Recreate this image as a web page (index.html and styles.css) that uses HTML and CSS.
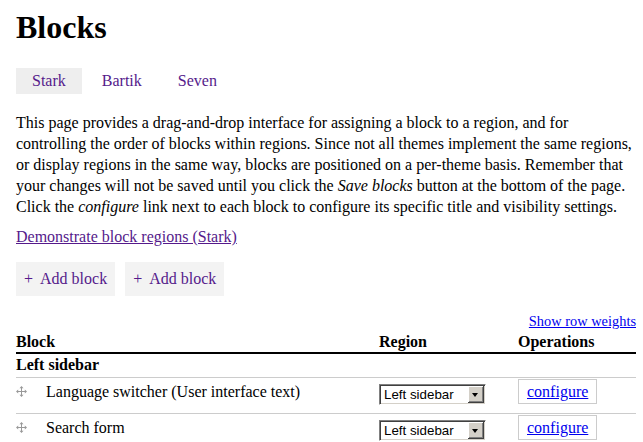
FILE: index.html
```html
<!DOCTYPE html>
<html lang="en">
<head>
  <meta charset="UTF-8">
  <meta name="viewport" content="width=device-width, initial-scale=1.0">
  <title>Blocks</title>
  <link rel="stylesheet" href="styles.css">
</head>
<body>
  <div class="pagina">
    <h1>Blocks</h1>

    <ul class="pestanas">
      <li><a href="#" class="activa">Stark</a></li>
      <li><a href="#">Bartik</a></li>
      <li><a href="#">Seven</a></li>
    </ul>

    <p class="intro">This page provides a drag-and-drop interface for assigning a block to a region, and for controlling the order of blocks within regions. Since not all themes implement the same regions, or display regions in the same way, blocks are positioned on a per-theme basis. Remember that your changes will not be saved until you click the <em>Save blocks</em> button at the bottom of the page. Click the <em>configure</em> link next to each block to configure its specific title and visibility settings.</p>

    <p class="demo"><a href="#">Demonstrate block regions (Stark)</a></p>

    <div class="acciones">
      <button><span class="mas">+</span>Add block</button>
      <button><span class="mas">+</span>Add block</button>
    </div>

    <div class="pesos"><a href="#">Show row weights</a></div>

    <table class="bloques">
      <colgroup>
        <col class="col-bloque">
        <col class="col-region">
        <col class="col-ops">
      </colgroup>
      <thead>
        <tr>
          <th>Block</th>
          <th>Region</th>
          <th>Operations</th>
        </tr>
      </thead>
      <tbody>
        <tr class="region">
          <td colspan="3">Left sidebar</td>
        </tr>
        <tr class="fila">
          <td>
            <div class="celda-bloque">
              <span class="asa">
                <svg width="11" height="11" viewBox="0 0 11 11">
                  <path d="M5.5 1.5v8M1.5 5.5h8" stroke="#999" stroke-width="1"/>
                  <path d="M5.5 0l2 2.2h-4zM5.5 11l2-2.2h-4zM0 5.5l2.2-2v4zM11 5.5l-2.2-2v4z" fill="#999"/>
                </svg>
              </span>
              <span class="titulo">Language switcher (User interface text)</span>
            </div>
          </td>
          <td>
            <div class="selector"><span class="valor">Left sidebar</span><span class="flecha"></span></div>
          </td>
          <td><a href="#" class="configurar">configure</a></td>
        </tr>
        <tr class="fila">
          <td>
            <div class="celda-bloque">
              <span class="asa">
                <svg width="11" height="11" viewBox="0 0 11 11">
                  <path d="M5.5 1.5v8M1.5 5.5h8" stroke="#999" stroke-width="1"/>
                  <path d="M5.5 0l2 2.2h-4zM5.5 11l2-2.2h-4zM0 5.5l2.2-2v4zM11 5.5l-2.2-2v4z" fill="#999"/>
                </svg>
              </span>
              <span class="titulo">Search form</span>
            </div>
          </td>
          <td>
            <div class="selector"><span class="valor">Left sidebar</span><span class="flecha"></span></div>
          </td>
          <td><a href="#" class="configurar">configure</a></td>
        </tr>
      </tbody>
    </table>
  </div>
</body>
</html>
```

FILE: styles.css
```css
body {
  margin: 0;
  font-family: 'Liberation Serif', 'Times New Roman', serif;
  font-size: 16px;
  color: #000;
  background: #fff;
}

.pagina {
  padding: 9px 7px 0 16px;
}

h1 {
  margin: 0 0 23px;
  font-size: 32px;
  line-height: 36px;
  font-weight: bold;
}

.pestanas {
  display: flex;
  gap: 4px;
  list-style: none;
  margin: 0 0 18px;
  padding: 0;
}

.pestanas a {
  display: block;
  padding: 4px 16px;
  line-height: 18px;
  color: #551a8b;
  text-decoration: none;
}

.pestanas a.activa {
  background: #eee;
}

.intro {
  margin: 0 0 9px;
  line-height: 21px;
}

.demo {
  margin: 0 0 15px;
  line-height: 21px;
}

.demo a {
  color: #551a8b;
}

.acciones {
  display: flex;
  gap: 10px;
  margin-bottom: 16px;
}

.acciones button {
  padding: 8px;
  border: none;
  background: #f3f3f3;
  color: #551a8b;
  font-family: inherit;
  font-size: 16px;
  line-height: 18px;
  cursor: pointer;
}

.mas {
  margin-right: 7px;
}

.pesos {
  width: 620px;
  text-align: right;
  font-size: 14.4px;
  line-height: 18px;
}

.pesos a {
  color: #00e;
}

.bloques {
  width: 620px;
  table-layout: fixed;
  border-collapse: separate;
  border-spacing: 0;
}

.col-bloque { width: 363px; }
.col-region { width: 139px; }
.col-ops { width: 118px; }

.bloques th {
  text-align: left;
  padding: 3px 0 1px;
  line-height: 18px;
  border-bottom: 2px solid #000;
}

.bloques td {
  padding: 0;
  line-height: 18px;
  vertical-align: top;
}

.region td {
  padding: 2px 0 3px;
  font-weight: bold;
  border-bottom: 1px solid #ccc;
}

.fila td {
  padding: 1px 0 8px;
  border-bottom: 1px solid #ccc;
}

.celda-bloque {
  display: flex;
  align-items: flex-start;
}

.asa {
  width: 30px;
  padding-top: 7px;
  line-height: 0;
}

.titulo {
  padding-top: 4px;
}

.selector {
  display: flex;
  align-items: center;
  box-sizing: border-box;
  width: 107px;
  height: 21px;
  margin-top: 5px;
  border: 1px solid;
  border-color: #808080 #fff #fff #808080;
  box-shadow: inset 1px 1px #404040, inset -1px -1px #d4d0c8;
  background: #fff;
  font-family: 'Liberation Sans', Arial, sans-serif;
  font-size: 13.33px;
  line-height: 15px;
}

.valor {
  flex: 1;
  padding-left: 4px;
}

.flecha {
  position: relative;
  width: 16px;
  height: 17px;
  margin-right: 1px;
  background: #d4d0c8;
  box-shadow: inset -1px -1px #404040, inset 1px 1px #fff, inset -2px -2px #808080;
}

.flecha::after {
  content: "";
  position: absolute;
  left: 4px;
  top: 7px;
  border-left: 3.5px solid transparent;
  border-right: 3.5px solid transparent;
  border-top: 4px solid #000;
}

.configurar {
  display: inline-block;
  padding: 3px 8px;
  border: 1px solid #ccc;
  line-height: 17px;
  color: #00e;
}
```
